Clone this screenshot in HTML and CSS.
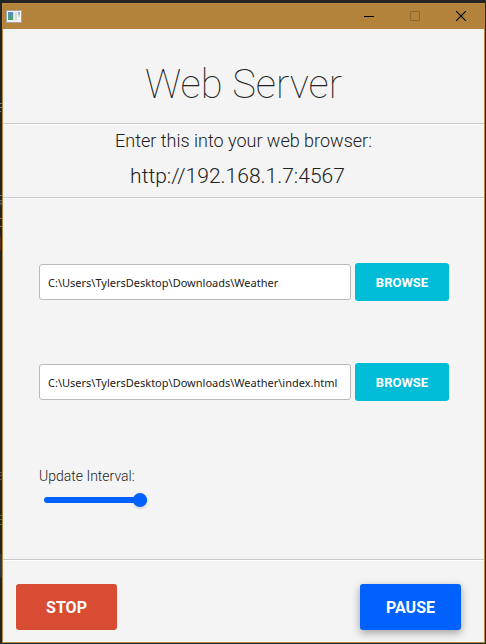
FILE: index.html
```html
<!DOCTYPE html>
<html lang="en">
<head>
<meta charset="utf-8">
<title>Web Server</title>
<link rel="stylesheet" href="styles.css">
</head>
<body>
<svg class="backdrop" width="2" height="644" aria-hidden="true">
  <path d="M0 103.500h2M0 107.500h2M0 111.500h1" stroke="#777b80"/>
  <path d="M0 195.500h2M0 200.500h2M1 202v3" stroke="#6f7378"/>
  <path d="M0 218.500h2M0 226.500h2" stroke="#a95a20"/>
  <path d="M.5 237v13" stroke="#54301c"/>
  <path d="M0 472.500h2M0 475.500h2M0 479.500h2" stroke="#6a4d68"/>
  <path d="M0 515.500h2M0 519.500h2M0 524.500h2" stroke="#5a6840"/>
  <path d="M1 554v23" stroke="#2f3740" stroke-width="2"/>
</svg>
<div class="window">
  <header class="titlebar">
    <svg class="app-icon" width="16" height="13" viewBox="0 0 16 13" aria-hidden="true">
      <defs>
        <linearGradient id="pane" x1="0" y1="0" x2="0" y2="1"><stop offset="0" stop-color="#5b8ec0"/><stop offset="1" stop-color="#3fa568"/></linearGradient>
        <linearGradient id="side" x1="0" y1="0" x2="0" y2="1"><stop offset="0" stop-color="#7fa4d8"/><stop offset="1" stop-color="#d8efd8"/></linearGradient>
      </defs>
      <rect x=".5" y=".5" width="15" height="12" fill="#f3f3f5" stroke="#a8a4aa"/>
      <path fill="url(#pane)" d="M2 2h5v8H2z"/>
      <path fill="#d9d9db" d="M7 2h1v8H7zM9 2h2v8H9z"/>
      <path fill="url(#side)" d="M12 2h2v5h-2z"/>
    </svg>
    <div class="controls">
      <button type="button" aria-label="Minimize"><svg width="10" height="10" viewBox="0 0 10 10"><path d="M0 5.500h10" stroke="#000"/></svg></button>
      <button type="button" aria-label="Maximize" disabled><svg width="10" height="10" viewBox="0 0 10 10"><path d="M.5.500h9v9h-9z" fill="none" stroke="#8e6930"/></svg></button>
      <button type="button" aria-label="Close"><svg width="10" height="10" viewBox="0 0 10 10"><path d="M0 0l10 10M10 0L0 10" stroke="#000" stroke-width="1.100"/></svg></button>
    </div>
  </header>
  <main class="content">
    <h1 class="heading">Web Server</h1>
    <section class="address">
      <p class="hint">Enter this into your web browser:</p>
      <p class="url">http://192.168.1.7:4567</p>
    </section>
    <form class="settings">
      <div class="row">
        <input class="path" type="text" aria-label="Folder" value="C:\Users\TylersDesktop\Downloads\Weather">
        <button class="browse" type="button">BROWSE</button>
      </div>
      <div class="row">
        <input class="path" type="text" aria-label="Page file" value="C:\Users\TylersDesktop\Downloads\Weather\index.html">
        <button class="browse" type="button">BROWSE</button>
      </div>
      <div class="interval">
        <label for="interval">Update Interval:</label>
        <input id="interval" class="slider" type="range" min="0" max="100" value="100">
      </div>
    </form>
    <footer class="actions">
      <button class="action stop" type="button">STOP</button>
      <button class="action pause" type="button">PAUSE</button>
    </footer>
  </main>
</div>
</body>
</html>
```

FILE: styles.css
```css
* {
  box-sizing: border-box;
}

body {
  margin: 0;
  min-height: 100vh;
  padding: 3px 1px 1px 2px;
  display: flex;
  background: #242424;
  color: #212121;
  font-family: Roboto, "Liberation Sans", sans-serif;
}

.backdrop {
  position: absolute;
  top: 0;
  left: 0;
}

.window {
  flex: 1;
  min-width: 0;
  display: flex;
  flex-direction: column;
  border: 1px solid #b8873e;
  background: #f4f4f4;
}

.titlebar {
  height: 25px;
  padding-left: 3px;
  display: flex;
  align-items: center;
  justify-content: space-between;
  background: #b3833b;
}

.controls {
  display: flex;
  height: 100%;
}

.controls button {
  width: 46px;
  padding: 0 0 1px;
  border: 0;
  background: none;
  display: flex;
  align-items: center;
  justify-content: center;
}

.content {
  flex: 1;
  display: flex;
  flex-direction: column;
}

.heading {
  margin: 0;
  padding: 32px 0 14px;
  font-size: 40px;
  line-height: 48px;
  font-weight: 100;
  text-align: center;
}

.address,
.settings,
.actions {
  border-top: 1px solid #c8c8c8;
  box-shadow: inset 0 1px #fff;
}

.address {
  padding-top: 3px;
  font-weight: 300;
  text-align: center;
}

.address p {
  margin: 0;
}

.hint {
  font-size: 18px;
  line-height: 28px;
}

.address .url {
  padding-right: 12px;
  font-size: 21px;
  line-height: 42px;
}

.settings {
  flex: 1;
  padding: 65px 35px 0 36px;
}

.row {
  display: flex;
  align-items: center;
  gap: 4px;
  margin-bottom: 62px;
}

.path {
  flex: 1;
  min-width: 0;
  height: 36px;
  padding: 0 8px;
  border: 1px solid #bababa;
  border-radius: 3px;
  background: #fff;
  color: #212121;
  font-family: "Noto Sans", "Open Sans", sans-serif;
  font-size: 11px;
}

.browse,
.action {
  border: 0;
  border-radius: 3px;
  color: #fff;
  font-family: inherit;
  font-weight: 700;
}

.browse {
  width: 94px;
  height: 38px;
  padding: 0;
  background: #00bcd7;
  font-size: 13px;
}

.interval {
  padding-top: 3px;
  display: flex;
  flex-direction: column;
  align-items: flex-start;
  gap: 6px;
  font-size: 14px;
  line-height: 20px;
  font-weight: 300;
}

.slider {
  appearance: none;
  width: 103px;
  height: 16px;
  margin: 0 0 0 5px;
  background: none;
}

.slider::-webkit-slider-runnable-track {
  height: 6px;
  margin-right: 0;
  border-radius: 3px;
  background: #0061ff;
}

.slider::-webkit-slider-thumb {
  appearance: none;
  width: 14px;
  height: 14px;
  margin-top: -4px;
  border-radius: 50%;
  background: #0061ff;
  box-shadow: 0 1px 3px rgba(0, 0, 0, 0.2);
}

.actions {
  display: flex;
  justify-content: space-between;
  padding: 24px 23px 12px 13px;
}

.action {
  width: 101px;
  height: 46px;
  font-size: 16px;
}

.stop {
  background: #d84c33;
}

.pause {
  background: #0061ff;
  box-shadow: 0 3px 9px rgba(0, 0, 0, 0.35);
}
```
